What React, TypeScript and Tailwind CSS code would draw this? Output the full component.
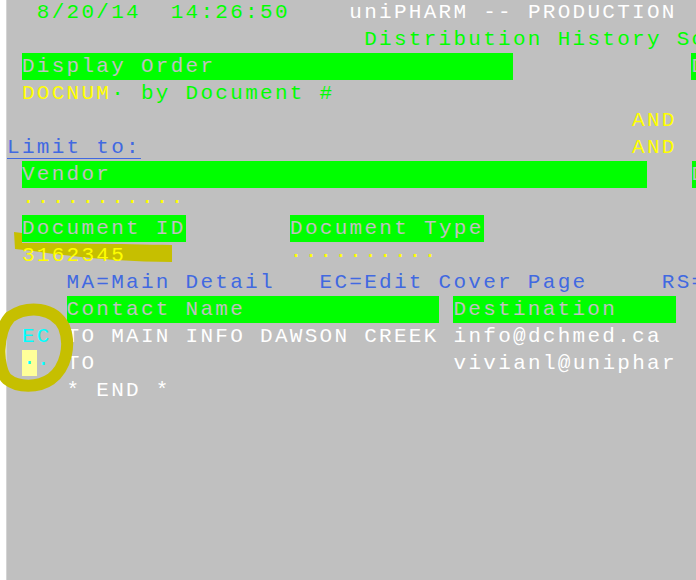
import React from 'react'

// one terminal column is 14.88px wide, one row 27px high

// green input/header field on the terminal screen
function Field({ w, children }: { w: string; children?: React.ReactNode }) {
  return <span className={`inline-block bg-[#00ff00] text-[#c0c0c0] leading-[27px] align-top ${w}`}>{children}</span>
}

function Row({ children }: { children?: React.ReactNode }) {
  return <div className="h-[27px] leading-[27px] whitespace-pre">{children}</div>
}

export default function App() {
  return (
    <div className="relative w-[696px] h-[580px] overflow-hidden flex bg-[#c0c0c0] font-['Liberation_Mono','Courier_New',monospace] text-[21px] tracking-[2.28px]">
      <div className="w-[7px] shrink-0 h-full bg-white border-r border-[#d4d4d4]" />

      <div className="flex-1 min-w-0 -mt-px">
        <Row>
          {'  '}
          <span className="text-[#00ff00]">8/20/14  14:26:50</span>
          {'    '}
          <span className="text-white">uniPHARM -- PRODUCTION</span>
        </Row>
        <Row>
          {' '.repeat(24)}
          <span className="text-[#00ff00]">Distribution History Screen</span>
        </Row>
        <Row>
          {' '}
          <Field w="w-[491px]">Display Order</Field>
          {' '.repeat(12)}
          <Field w="w-[149px]">Date</Field>
        </Row>
        <Row>
          {' '}
          <span className="text-[#ffff00]">DOCNUM</span>
          <span className="text-[#00ff00]">· by Document #</span>
        </Row>
        <Row>
          {' '.repeat(42)}
          <span className="text-[#ffff00]">AND</span>
        </Row>
        <Row>
          <span className="text-[#4169e1] underline decoration-1 underline-offset-[5px]">Limit to:</span>
          {' '.repeat(33)}
          <span className="text-[#ffff00]">AND</span>
        </Row>
        <Row>
          {' '}
          <Field w="w-[625px]">Vendor</Field>
          {'   '}
          <Field w="w-[149px]">Date</Field>
        </Row>
        <Row>
          {' '}
          <span className="text-[#ffff00]">{'·'.repeat(11)}</span>
        </Row>
        <Row>
          {' '}
          <Field w="w-[164px]">Document ID</Field>
          {' '.repeat(7)}
          <Field w="w-[194px]">Document Type</Field>
        </Row>
        <Row>
          <div className="relative">
            {/* highlighter stroke under the document number */}
            <svg className="absolute left-0 top-0 overflow-visible" width="200" height="30" viewBox="7 242 200 30">
              <path
                d="M14 232 L22 233 L22 243 C 60 243, 120 244, 172 245 L 172 262 C 130 262, 80 258, 33 251 L 15 249 Z"
                fill="#c6bf00"
              />
            </svg>
            <div className="relative">
              {' '}
              <span className="text-[#ffff00]">3162345</span>
              {' '.repeat(11)}
              <span className="text-[#ffff00]">{'·'.repeat(10)}</span>
            </div>
          </div>
        </Row>
        <Row>
          {'    '}
          <span className="text-[#4169e1]">MA=Main Detail   EC=Edit Cover Page     RS=Resend</span>
        </Row>
        <Row>
          {'    '}
          <Field w="w-[372px]">Contact Name</Field>
          {' '}
          <Field w="w-[223px]">Destination</Field>
        </Row>
        <Row>
          {' '}
          <span className="text-[#00ffff]">EC</span>
          {' '}
          <span className="text-white">TO MAIN INFO DAWSON CREEK</span>
          {' '}
          <span className="text-white">info@dchmed.ca</span>
        </Row>
        <Row>
          {' '}
          <span className="inline-block w-[15px] h-[26px] leading-[26px] align-top bg-[#ffff99] text-[#00ffff] text-center tracking-normal">·</span>
          <span className="text-[#00ffff]">·</span>
          {' '}
          <span className="text-white">TO</span>
          {' '.repeat(24)}
          <span className="text-white">vivianl@uniphar</span>
        </Row>
        <Row>
          {'    '}
          <span className="text-white">* END *</span>
        </Row>
      </div>

      {/* highlighter circle drawn over the screenshot */}
      <svg className="absolute left-0 top-0 pointer-events-none" width="696" height="580">
        <path
          d="M10 317 C 28 305, 54 307, 64 327 C 71 345, 66 368, 51 379 C 38 388, 18 388, 7 379 C -3 369, -4 333, 10 317 Z"
          fill="none"
          stroke="#c6bf00"
          strokeWidth="12"
        />
      </svg>
    </div>
  )
}
